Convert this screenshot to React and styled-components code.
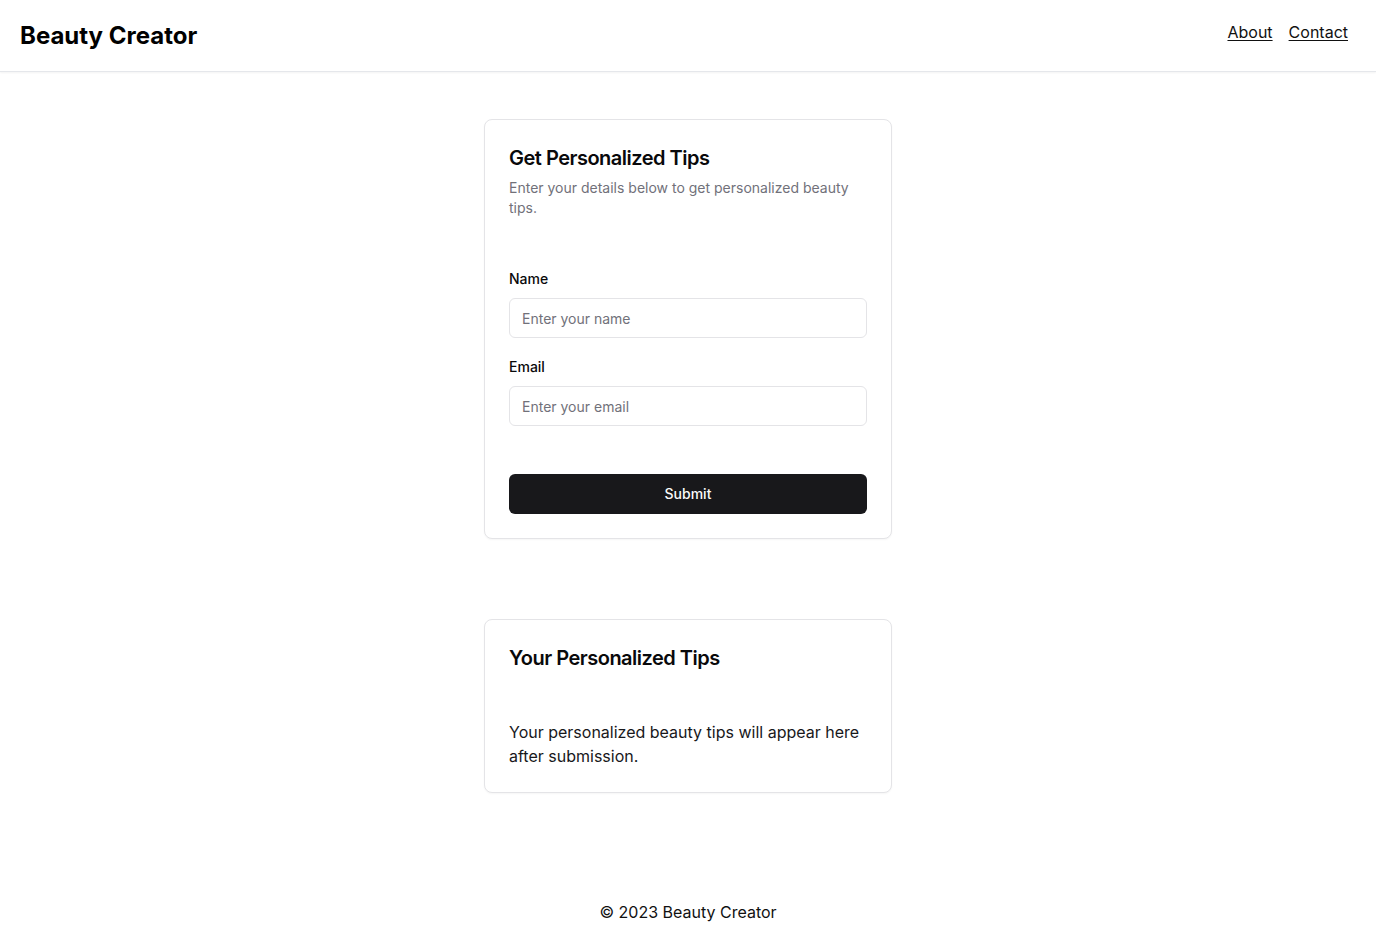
import React from 'react';
import styled, { createGlobalStyle } from 'styled-components';

const GlobalStyle = createGlobalStyle`
  * { box-sizing: border-box; }
  body {
    margin: 0;
    font-family: Inter, "Noto Sans", sans-serif;
    color: #09090b;
    background: #fff;
  }
`;

const Page = styled.div`
  min-height: 100vh;
  display: flex;
  flex-direction: column;
`;

const Header = styled.header`
  height: 72px;
  display: flex;
  align-items: center;
  justify-content: space-between;
  padding: 0 28px 0 20px;
  border-bottom: 1px solid #e5e7eb;
  box-shadow: 0 1px 2px rgba(0, 0, 0, 0.05);
`;

const Logo = styled.h1`
  margin: 0;
  font-size: 24px;
  font-weight: 700;
  line-height: 32px;
  color: #000;
`;

const Nav = styled.nav`
  display: flex;
  gap: 16px;
  margin-top: -8px;
`;

const NavLink = styled.a`
  font-size: 16px;
  line-height: 24px;
  color: #111;
  text-decoration: underline;
  text-underline-offset: 2px;
  cursor: pointer;
`;

const Main = styled.main`
  flex: 1;
  display: flex;
  flex-direction: column;
  align-items: center;
  gap: 80px;
  padding-top: 47px;
`;

const Card = styled.section`
  width: 408px;
  border: 1px solid #e4e4e7;
  border-radius: 8px;
  background: #fff;
  box-shadow: 0 1px 2px rgba(0, 0, 0, 0.04);
  padding: 24px;
`;

const Title = styled.h2`
  margin: 0;
  font-size: 20px;
  line-height: 28px;
  font-weight: 600;
  letter-spacing: -0.5px;
`;

const Description = styled.p`
  margin: 6px 0 0;
  font-size: 14px;
  line-height: 20px;
  color: #71717a;
`;

const Form = styled.form`
  display: flex;
  flex-direction: column;
  margin-top: 51px;
`;

const Field = styled.div`
  display: flex;
  flex-direction: column;
  gap: 9px;
  margin-bottom: ${(p) => p.$last ? '48px' : '19px'};
`;

const Label = styled.label`
  font-size: 14px;
  line-height: 20px;
  font-weight: 500;
`;

const Input = styled.input`
  height: 40px;
  width: 100%;
  border: 1px solid #e4e4e7;
  border-radius: 6px;
  padding: 0 12px;
  font-family: inherit;
  font-size: 14px;
  color: #09090b;
  outline: none;
  &::placeholder { color: #71717a; }
`;

const Button = styled.button`
  height: 40px;
  width: 100%;
  display: flex;
  align-items: center;
  justify-content: center;
  padding: 0 0 1px;
  border: none;
  border-radius: 6px;
  background: #18181b;
  color: #fafafa;
  font-family: inherit;
  font-size: 14px;
  line-height: 20px;
  font-weight: 500;
  cursor: pointer;
`;

const Body = styled.p`
  margin: 48px 0 0;
  font-size: 16px;
  line-height: 24px;
  color: #18181b;
`;

const Footer = styled.footer`
  text-align: center;
  font-size: 16px;
  line-height: 24px;
  padding: 20px 0;
  color: #111;
`;

export default function App() {
  return (
    <Page>
      <GlobalStyle />
      <Header>
        <Logo>Beauty Creator</Logo>
        <Nav>
          <NavLink>About</NavLink>
          <NavLink>Contact</NavLink>
        </Nav>
      </Header>
      <Main>
        <Card>
          <Title>Get Personalized Tips</Title>
          <Description>Enter your details below to get personalized beauty tips.</Description>
          <Form onSubmit={(e) => e.preventDefault()}>
            <Field>
              <Label htmlFor="name">Name</Label>
              <Input id="name" placeholder="Enter your name" />
            </Field>
            <Field $last>
              <Label htmlFor="email">Email</Label>
              <Input id="email" type="email" placeholder="Enter your email" />
            </Field>
            <Button type="submit">Submit</Button>
          </Form>
        </Card>
        <Card>
          <Title>Your Personalized Tips</Title>
          <Body>Your personalized beauty tips will appear here after submission.</Body>
        </Card>
      </Main>
      <Footer>© 2023 Beauty Creator</Footer>
    </Page>
  );
}
